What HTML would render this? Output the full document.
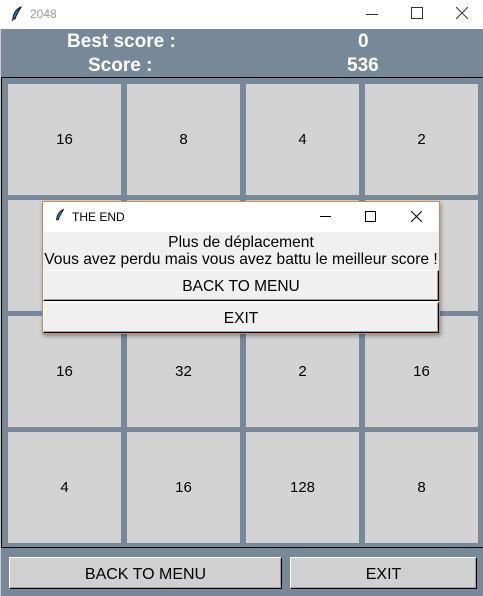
<!DOCTYPE html>
<html><head><style>
body{margin:0;width:483px;height:596px;overflow:hidden;position:relative;font-family:"Liberation Sans",Arial,sans-serif;background:#778899}
.a{position:absolute}
.tile{position:absolute;width:113px;height:111px;background:#d3d3d3;display:flex;align-items:center;justify-content:center;font-size:15px;color:#000}
.btn{position:absolute;background:#d0d0d0;border:1px solid #000;border-top-color:#fff;border-left-color:#fff;box-shadow:inset -1px -1px 0 #a0a0a0;display:flex;align-items:center;justify-content:center;font-size:16px;box-sizing:border-box}
</style></head><body>
<div class="a" style="left:0;top:0;width:483px;height:29px;background:#fff"></div>
<svg class="a" style="left:10px;top:6px" width="14" height="16" viewBox="0 0 14 16"><path d="M11 1 C6 3 3 8 3 13 L5 13 C6 9 9 5 11 1Z" fill="#3a6fc4" stroke="#111" stroke-width="1"/><path d="M3 13 L2 15" stroke="#111"/></svg>
<div class="a" style="left:30px;top:7px;font-size:12px;color:#999">2048</div>
<div class="a" style="left:366px;top:14px;width:12px;height:1px;background:#333"></div>
<div class="a" style="left:411px;top:7px;width:10px;height:10px;border:1px solid #333"></div>
<svg class="a" style="left:456px;top:7px" width="12" height="12"><path d="M0 0L12 12M12 0L0 12" stroke="#333"/></svg>
<div class="a" style="left:0;top:29px;width:1px;height:567px;background:#ccc"></div>
<div class="a" style="left:67px;top:31px;color:#fff;font-weight:bold;font-size:19px">Best score :</div>
<div class="a" style="left:88px;top:55px;color:#fff;font-weight:bold;font-size:19px">Score :</div>
<div class="a" style="left:358px;top:31px;color:#fff;font-weight:bold;font-size:19px">0</div>
<div class="a" style="left:347px;top:55px;color:#fff;font-weight:bold;font-size:19px">536</div>
<div class="a" style="left:1px;top:77px;width:482px;height:471px;border-top:1px solid #000;border-left:1px solid #000;border-bottom:1px solid #000;box-sizing:border-box"></div>
<div class="tile" style="left:8px;top:84px">16</div><div class="tile" style="left:127px;top:84px">8</div><div class="tile" style="left:246px;top:84px">4</div><div class="tile" style="left:365px;top:84px">2</div>
<div class="tile" style="left:8px;top:200px"></div><div class="tile" style="left:127px;top:200px"></div><div class="tile" style="left:246px;top:200px"></div><div class="tile" style="left:365px;top:200px"></div>
<div class="tile" style="left:8px;top:316px">16</div><div class="tile" style="left:127px;top:316px">32</div><div class="tile" style="left:246px;top:316px">2</div><div class="tile" style="left:365px;top:316px">16</div>
<div class="tile" style="left:8px;top:432px">4</div><div class="tile" style="left:127px;top:432px">16</div><div class="tile" style="left:246px;top:432px">128</div><div class="tile" style="left:365px;top:432px">8</div>
<div class="btn" style="left:9px;top:557px;width:273px;height:32px;padding-top:3px">BACK TO MENU</div>
<div class="btn" style="left:290px;top:557px;width:187px;height:32px;padding-top:3px">EXIT</div>
<div class="a" style="left:42px;top:201px;width:398px;height:133px;border:1px solid #d08a50;box-sizing:border-box;background:#f0f0f0;box-shadow:1px 2px 4px rgba(0,0,0,.35)">
<div class="a" style="left:0;top:0;width:396px;height:30px;background:#fff"></div>
<svg class="a" style="left:11px;top:6px" width="12" height="15" viewBox="0 0 14 16"><path d="M11 1 C6 3 3 8 3 13 L5 13 C6 9 9 5 11 1Z" fill="#3a6fc4" stroke="#111"/></svg>
<div class="a" style="left:29px;top:8px;font-size:12px">THE END</div>
<div class="a" style="left:277px;top:14px;width:11px;height:1px;background:#000"></div>
<div class="a" style="left:322px;top:9px;width:9px;height:9px;border:1px solid #000"></div>
<svg class="a" style="left:368px;top:9px" width="11" height="11"><path d="M0 0L11 11M11 0L0 11" stroke="#000"/></svg>
<div class="a" style="left:0;top:32px;width:396px;text-align:center;font-size:15.6px;line-height:17px;white-space:nowrap">Plus de déplacement<br>Vous avez perdu mais vous avez battu le meilleur score !</div>
<div class="btn" style="left:0;top:68px;width:396px;height:31px;background:#f0f0f0;font-size:15.5px;padding-top:2px">BACK TO MENU</div>
<div class="btn" style="left:0;top:100px;width:396px;height:31px;background:#f0f0f0;font-size:15.5px;padding-top:3px">EXIT</div>
</div>
</body></html>
